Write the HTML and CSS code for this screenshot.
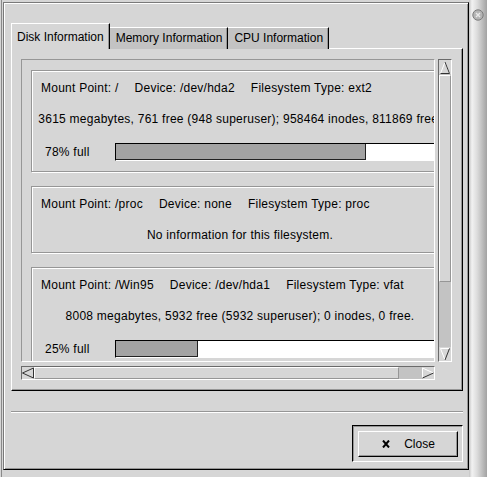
FILE: index.html
```html
<!DOCTYPE html>
<html>
<head>
<meta charset="utf-8">
<title>Disk Information</title>
<link rel="stylesheet" href="styles.css">
</head>
<body>
<div class="screen">
  <div class="client">
    <div class="notebook">
      <div class="tabs">
        <div class="tab active">Disk Information</div>
        <div class="tab">Memory Information</div>
        <div class="tab">CPU Information</div>
      </div>
      <div class="page">
        <div class="scrolled">
          <div class="viewport">
            <div class="content">
              <div class="fs fs-big">
                <div class="fs-head"><span>Mount Point: /</span><span>Device: /dev/hda2</span><span>Filesystem Type: ext2</span></div>
                <div class="fs-info">3615 megabytes, 761 free (948 superuser); 958464 inodes, 811869 free.</div>
                <div class="fs-usage"><span class="pct">78% full</span><div class="bar"><div class="fill" style="width:78%"></div></div></div>
              </div>
              <div class="fs fs-small">
                <div class="fs-head"><span>Mount Point: /proc</span><span>Device: none</span><span>Filesystem Type: proc</span></div>
                <div class="fs-info">No information for this filesystem.</div>
              </div>
              <div class="fs fs-big">
                <div class="fs-head"><span>Mount Point: /Win95</span><span>Device: /dev/hda1</span><span>Filesystem Type: vfat</span></div>
                <div class="fs-info">8008 megabytes, 5932 free (5932 superuser); 0 inodes, 0 free.</div>
                <div class="fs-usage"><span class="pct">25% full</span><div class="bar"><div class="fill" style="width:25.6%"></div></div></div>
              </div>
            </div>
          </div>
          <div class="vscroll">
            <div class="arrow">
              <svg width="12" height="13" viewBox="0 0 12 13"><path d="M1.5 12.5 L6 1 L10.5 12.5" fill="none" stroke="#fff"/><path d="M6 1 L10.5 12.5 L1.5 12.5" fill="none" stroke="#333"/></svg>
            </div>
            <div class="vthumb"></div>
            <div class="trough"></div>
            <div class="arrow">
              <svg width="12" height="13" viewBox="0 0 12 13"><path d="M10.5 0.5 L1.5 0.5 L6 12" fill="none" stroke="#fff"/><path d="M10.5 0.5 L6 12" fill="none" stroke="#333"/></svg>
            </div>
          </div>
          <div class="hscroll">
            <div class="arrow">
              <svg width="12" height="12" viewBox="0 0 12 12"><path d="M11.5 1 L0.5 6 L11.5 11 Z" fill="none" stroke="#333"/></svg>
            </div>
            <div class="hthumb"></div>
            <div class="trough"></div>
            <div class="arrow">
              <svg width="12" height="12" viewBox="0 0 12 12"><path d="M0.5 11 L0.5 1 L11.5 6" fill="none" stroke="#fff"/><path d="M11.5 6 L0.5 11" fill="none" stroke="#333"/></svg>
            </div>
          </div>
        </div>
      </div>
    </div>
    <div class="separator"></div>
    <div class="actions">
      <div class="default-frame">
        <button class="btn" type="button">
          <svg class="btn-icon" width="8" height="8" viewBox="0 0 8 8"><path d="M1 0.5 L7 7.5 M7 0.5 L1 7.5" stroke="#000" stroke-width="2" fill="none"/></svg>
          <span>Close</span>
        </button>
      </div>
    </div>
  </div>
  <div class="wm-strip">
    <svg class="wm-close" width="12" height="12" viewBox="0 0 12 12">
      <circle cx="6" cy="6" r="5.2" fill="#b4b4b4" stroke="#7c7c7c"/>
      <path d="M4 4 L8 8 M8 4 L4 8" stroke="#e8e8e8" stroke-width="1.4"/>
    </svg>
  </div>
</div>
</body>
</html>
```

FILE: styles.css
```css
* { box-sizing: border-box; }

html, body {
  margin: 0;
  padding: 0;
}

body {
  width: 487px;
  height: 477px;
  overflow: hidden;
  background: #d6d6d6;
  font-family: "Liberation Sans", Arial, sans-serif;
  font-size: 12px;
  color: #000;
}

.screen {
  display: flex;
  width: 487px;
  height: 477px;
  box-shadow: inset 1px 0 0 #d6d6d6, inset 2px 0 0 #8a8a8a;
}

.client {
  width: 466px;
  height: 468px;
  margin: 2px 0 0 3px;
  border: 1px solid;
  border-color: #7a7a7a #000 #000 #7a7a7a;
  box-shadow: inset 1px 1px 0 #fff, inset -1px -1px 0 #969696;
  padding: 20px 5px 7px 7px;
  display: flex;
  flex-direction: column;
}

.wm-strip {
  width: 18px;
  height: 477px;
  background: linear-gradient(to right, #c4c4c4 0, #f2f2f2 3px, #dcdcdc 45%, #a2a2a2 100%);
  padding: 9px 0 0 3px;
}

.wm-close { display: block; }

/* notebook */
.notebook {
  display: flex;
  flex-direction: column;
  width: 452px;
}

.tabs {
  display: flex;
  align-items: flex-end;
  height: 26px;
  margin-bottom: -1px;
  position: relative;
  z-index: 1;
}

.tab {
  height: 22px;
  padding: 3px 5px 0 6px;
  border-top: 1px solid #fff;
  border-right: 1px solid #000;
  background: #c3c3c3;
  line-height: 14px;
  white-space: nowrap;
  box-shadow: inset -1px 0 0 #969696;
}

.tab.active {
  height: 26px;
  padding: 6px 5px 0 5px;
  border-left: 1px solid #fff;
  background: #d6d6d6;
}

.page {
  height: 343px;
  border: 1px solid;
  border-color: #fff #000 #000 #fff;
  box-shadow: inset -1px -1px 0 #969696;
  padding: 10px 10px 10px 9px;
}

.scrolled {
  display: grid;
  grid-template-columns: 414px 14px;
  grid-template-rows: 303px 14px;
  column-gap: 3px;
  row-gap: 4px;
}

.viewport {
  border: 1px solid;
  border-color: #969696 #fff #fff #969696;
  overflow: hidden;
}

.content {
  width: 460px;
  padding: 10px 0 0 9px;
}

/* filesystem frames */
.fs {
  width: 418px;
  border: 1px solid #969696;
  box-shadow: inset 1px 1px 0 #fff, 1px 1px 0 #fff;
  letter-spacing: 0.25px;
  white-space: nowrap;
  margin-bottom: 14px;
}

.fs-big { padding-bottom: 10px; }
.fs-small { padding-bottom: 1px; }

.fs-head {
  height: 33px;
  display: flex;
  align-items: center;
  gap: 16px;
  padding-left: 9px;
}

.fs-info {
  height: 31px;
  line-height: 31px;
  text-align: center;
}

.fs-usage {
  display: flex;
  align-items: center;
  padding: 8px 11px 0 13px;
}

.pct {
  width: 70px;
  flex: none;
}

.bar {
  flex: none;
  width: 322px;
  height: 18px;
  border: 1px solid;
  border-color: #000 #fff #fff #000;
  background: #fff;
}

.fill {
  height: 100%;
  background: #a3a3a3;
  border-right: 1px solid #222;
  border-bottom: 1px solid #222;
}

/* scrollbars */
.vscroll, .hscroll {
  border: 1px solid;
  border-color: #6a6a6a #fff #fff #6a6a6a;
  background: #c3c3c3;
  display: flex;
}

.vscroll { flex-direction: column; }
.hscroll { flex-direction: row; }

.arrow {
  flex: none;
  display: flex;
  align-items: center;
  justify-content: center;
  background: #d6d6d6;
}

.vscroll .arrow { height: 14px; }
.hscroll .arrow { width: 12px; }

.arrow svg { display: block; }

.vthumb {
  flex: none;
  height: 207px;
  margin-top: 1px;
  background: #d6d6d6;
  border: 1px solid;
  border-color: #fff #969696 #969696 #fff;
}

.hthumb {
  flex: none;
  width: 365px;
  background: #d6d6d6;
  border: 1px solid;
  border-color: #fff #969696 #969696 #fff;
}

.trough { flex: 1; }

/* bottom area */
.separator {
  height: 2px;
  margin-top: 20px;
  border-top: 1px solid #969696;
  border-bottom: 1px solid #fff;
  width: 452px;
}

.actions {
  display: flex;
  justify-content: flex-end;
  width: 452px;
  margin-top: 12px;
}

.default-frame {
  width: 111px;
  height: 37px;
  border: 1px solid;
  border-color: #000 #fff #fff #000;
  box-shadow: inset 1px 1px 0 #969696;
  padding: 5px;
}

.btn {
  width: 100px;
  height: 26px;
  margin: 0;
  padding: 0 0 0 1px;
  border: 1px solid;
  border-color: #fff #000 #000 #fff;
  box-shadow: inset -1px -1px 0 #969696;
  background: #d6d6d6;
  font: inherit;
  color: #000;
  display: flex;
  align-items: center;
  justify-content: center;
  gap: 14px;
}

.btn-icon { display: block; }
```
